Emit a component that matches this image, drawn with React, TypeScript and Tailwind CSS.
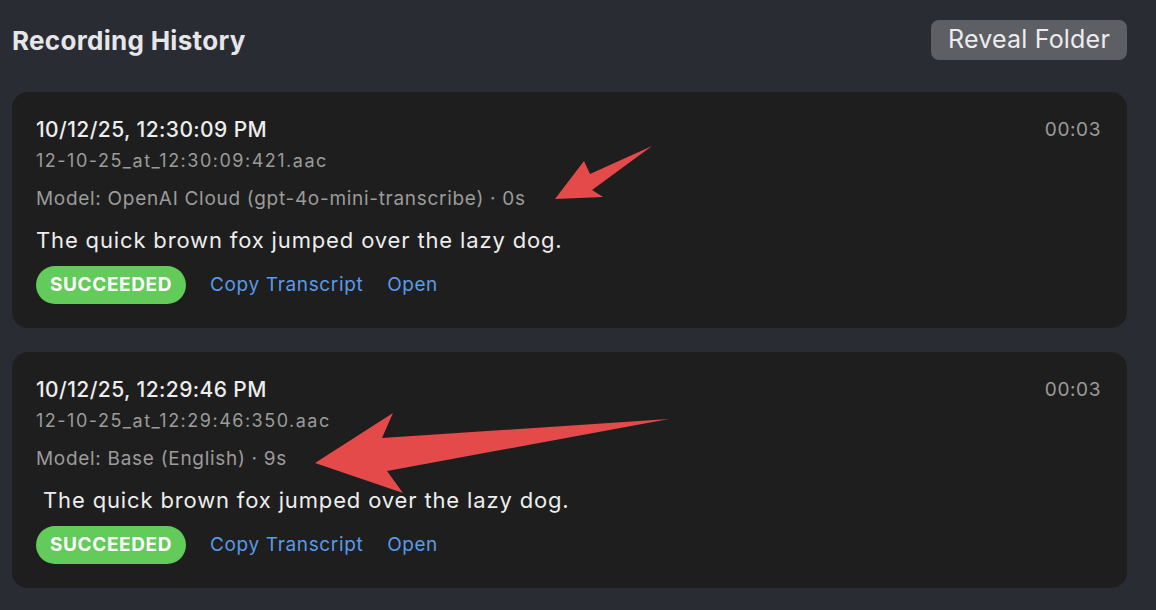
import React from 'react';

const RECORDINGS = [
  { id: '1', when: '10/12/25, 12:30:09 PM', file: '12-10-25_at_12:30:09:421.aac', model: 'Model: OpenAI Cloud (gpt-4o-mini-transcribe) · 0s', text: 'The quick brown fox jumped over the lazy dog.', dur: '00:03' },
  { id: '2', when: '10/12/25, 12:29:46 PM', file: '12-10-25_at_12:29:46:350.aac', model: 'Model: Base (English) · 9s', text: '\u00a0The quick brown fox jumped over the lazy dog.', dur: '00:03' },
];

function Arrows() {
  return (
    <svg className="pointer-events-none absolute left-0 top-0" width="1156" height="610" viewBox="0 0 1156 610">
      <polygon points="652,146 590,174 584,161 555,199 603,197 592,190" fill="#e54a4a" />
      <polygon points="669,419 382,438 393,413 315,463 403,493 387,471" fill="#e54a4a" />
    </svg>
  );
}

export default function App() {
  return (
    <div className="relative h-[610px] w-[1156px] overflow-hidden bg-[#2a2c33] pl-3 pr-[29px] pt-5 font-['Inter','Liberation_Sans',sans-serif]">
      <div className="flex h-10 items-center justify-between">
        <h1 className="text-[26px] font-bold tracking-[0.3px] text-[#e6e6e8]">Recording History</h1>
        <button className="h-10 w-[196px] rounded-lg bg-[#5e5f64] text-[25px] tracking-[0.2px] text-[#ececee]">Reveal Folder</button>
      </div>
      <div className="mt-8 flex flex-col gap-6">
        {RECORDINGS.map(r => (
          <div key={r.id} className="rounded-2xl bg-[#1e1e1e] px-6 pb-6 pt-[26px]">
            <div className="flex items-start justify-between">
              <div>
                <p className="text-[21px] font-medium leading-6 tracking-[0.4px] text-[#ededed]">{r.when}</p>
                <p className="mt-2 text-[18px] leading-[22px] tracking-[1.5px] text-[#9b9b9b]">{r.file}</p>
              </div>
              <span className="pr-0.5 text-[19px] leading-6 tracking-[0.6px] text-[#9b9b9b]">{r.dur}</span>
            </div>
            <p className="mt-4 text-[19px] leading-[22px] tracking-[0.7px] text-[#9b9b9b]">{r.model}</p>
            <p className="mt-4 whitespace-pre text-[22px] leading-7 tracking-[0.85px] text-[#ededed]">{r.text}</p>
            <div className="mt-3 flex items-center">
              <span className="flex h-[38px] w-[150px] items-center justify-center rounded-full bg-[#62cb5a] text-[19px] font-bold tracking-[0.6px] text-white">SUCCEEDED</span>
              <a className="ml-6 text-[19px] tracking-[0.65px] text-[#5a9ae8]">Copy Transcript</a>
              <a className="ml-6 text-[19px] tracking-[0.5px] text-[#5a9ae8]">Open</a>
            </div>
          </div>
        ))}
      </div>
      <Arrows />
    </div>
  );
}
